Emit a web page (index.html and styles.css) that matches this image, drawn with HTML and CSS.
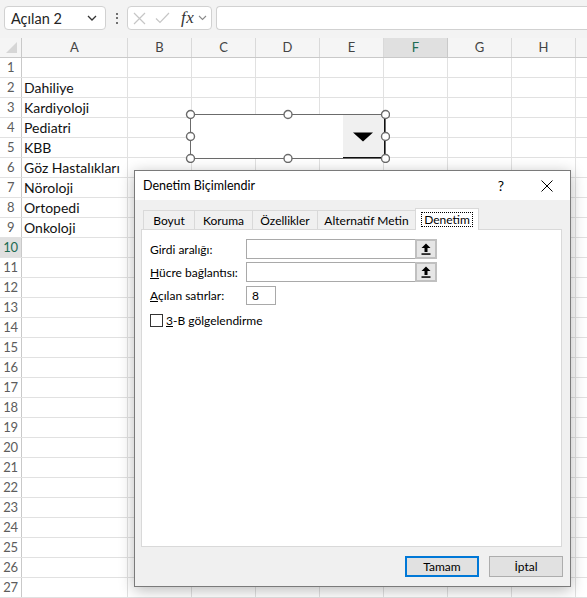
FILE: index.html
```html
<!DOCTYPE html>
<html lang="tr">
<head>
<meta charset="utf-8">
<title>Excel</title>
<link rel="stylesheet" href="styles.css">
</head>
<body>
<div class="fbar">
  <div class="namebox">
    <span>Açılan 2</span>
    <svg class="chev" width="10" height="6" viewBox="0 0 10 6"><path d="M1 1 L5 5 L9 1" fill="none" stroke="#333" stroke-width="1.3"/></svg>
  </div>
  <div class="vdots"><i></i><i></i><i></i></div>
  <div class="fxbox">
    <svg class="ic" width="13" height="13" viewBox="0 0 13 13"><path d="M1 1 L12 12 M12 1 L1 12" stroke="#c6c6c6" stroke-width="1.2"/></svg>
    <svg class="ic" width="15" height="12" viewBox="0 0 15 12"><path d="M1 6.5 L5 10.5 L14 1" fill="none" stroke="#c6c6c6" stroke-width="1.2"/></svg>
    <span class="fx">fx</span>
    <svg class="chev2" width="9" height="6" viewBox="0 0 9 6"><path d="M1 1 L4.5 4.5 L8 1" fill="none" stroke="#8a8a8a" stroke-width="1.1"/></svg>
  </div>
  <div class="formula"></div>
</div>

<div class="sheet">
  <div class="hdr">
    <div class="corner"><span class="tri"></span></div>
    <div class="ch ca">A</div>
    <div class="ch">B</div>
    <div class="ch">C</div>
    <div class="ch">D</div>
    <div class="ch">E</div>
    <div class="ch sel">F</div>
    <div class="ch">G</div>
    <div class="ch">H</div>
    <div class="ch last"></div>
  </div>
  <div class="row"><div class="rh">1</div><div class="cell"></div><div class="rest"></div></div>
  <div class="row"><div class="rh">2</div><div class="cell">Dahiliye</div><div class="rest"></div></div>
  <div class="row"><div class="rh">3</div><div class="cell">Kardiyoloji</div><div class="rest"></div></div>
  <div class="row"><div class="rh">4</div><div class="cell">Pediatri</div><div class="rest"></div></div>
  <div class="row"><div class="rh">5</div><div class="cell">KBB</div><div class="rest"></div></div>
  <div class="row"><div class="rh">6</div><div class="cell">Göz Hastalıkları</div><div class="rest"></div></div>
  <div class="row"><div class="rh">7</div><div class="cell">Nöroloji</div><div class="rest"></div></div>
  <div class="row"><div class="rh">8</div><div class="cell">Ortopedi</div><div class="rest"></div></div>
  <div class="row"><div class="rh">9</div><div class="cell">Onkoloji</div><div class="rest"></div></div>
  <div class="row"><div class="rh sel">10</div><div class="cell"></div><div class="rest"></div></div>
  <div class="row"><div class="rh">11</div><div class="cell"></div><div class="rest"></div></div>
  <div class="row"><div class="rh">12</div><div class="cell"></div><div class="rest"></div></div>
  <div class="row"><div class="rh">13</div><div class="cell"></div><div class="rest"></div></div>
  <div class="row"><div class="rh">14</div><div class="cell"></div><div class="rest"></div></div>
  <div class="row"><div class="rh">15</div><div class="cell"></div><div class="rest"></div></div>
  <div class="row"><div class="rh">16</div><div class="cell"></div><div class="rest"></div></div>
  <div class="row"><div class="rh">17</div><div class="cell"></div><div class="rest"></div></div>
  <div class="row"><div class="rh">18</div><div class="cell"></div><div class="rest"></div></div>
  <div class="row"><div class="rh">19</div><div class="cell"></div><div class="rest"></div></div>
  <div class="row"><div class="rh">20</div><div class="cell"></div><div class="rest"></div></div>
  <div class="row"><div class="rh">21</div><div class="cell"></div><div class="rest"></div></div>
  <div class="row"><div class="rh">22</div><div class="cell"></div><div class="rest"></div></div>
  <div class="row"><div class="rh">23</div><div class="cell"></div><div class="rest"></div></div>
  <div class="row"><div class="rh">24</div><div class="cell"></div><div class="rest"></div></div>
  <div class="row"><div class="rh">25</div><div class="cell"></div><div class="rest"></div></div>
  <div class="row"><div class="rh">26</div><div class="cell"></div><div class="rest"></div></div>
  <div class="row"><div class="rh">27</div><div class="cell"></div><div class="rest"></div></div>
</div>

<svg class="ddctl" width="205" height="54" viewBox="0 0 205 54">
  <rect x="5.5" y="5.5" width="195" height="44" fill="#fff" stroke="#6b6b6b" stroke-width="1"/>
  <rect x="158" y="6" width="42" height="43" fill="#f0f0f0"/>
  <path d="M158 48.5 H199.5 V6" fill="none" stroke="#111" stroke-width="1"/>
  <path d="M168 23.5 H188 L178 32.5 Z" fill="#000"/>
  <g fill="#fff" stroke="#6b6b6b" stroke-width="1.4">
    <circle cx="5.5" cy="5.5" r="4"/>
    <circle cx="103" cy="5.5" r="4"/>
    <circle cx="200.5" cy="5.5" r="4"/>
    <circle cx="5.5" cy="27.5" r="4"/>
    <circle cx="200.5" cy="27.5" r="4"/>
    <circle cx="5.5" cy="49.5" r="4"/>
    <circle cx="103" cy="49.5" r="4"/>
    <circle cx="200.5" cy="49.5" r="4"/>
  </g>
</svg>

<div class="dlg">
  <div class="dtitle">
    <span class="dt">Denetim Biçimlendir</span>
    <span class="tbtn help">?</span>
    <span class="tbtn"><svg width="12" height="12" viewBox="0 0 12 12"><path d="M0.5 0.5 L11.5 11.5 M11.5 0.5 L0.5 11.5" stroke="#000" stroke-width="1"/></svg></span>
  </div>
  <div class="dbody">
    <div class="tabs">
      <div class="tab t1">Boyut</div>
      <div class="tab t2">Koruma</div>
      <div class="tab t3">Özellikler</div>
      <div class="tab t4">Alternatif Metin</div>
      <div class="tab active"><span class="focus">Denetim</span></div>
    </div>
    <div class="panel">
      <div class="frow">
        <span class="flabel">Girdi aralığı:</span>
        <div class="refinput"><div class="field"></div><div class="refbtn"><svg width="10" height="12" viewBox="0 0 10 12"><path d="M5 0.5 L9.5 5 H6.5 V9 H3.5 V5 H0.5 Z" fill="#000"/><rect x="0.5" y="10.3" width="9" height="1.5" fill="#000"/></svg></div></div>
      </div>
      <div class="frow">
        <span class="flabel"><u>H</u>ücre bağlantısı:</span>
        <div class="refinput"><div class="field"></div><div class="refbtn"><svg width="10" height="12" viewBox="0 0 10 12"><path d="M5 0.5 L9.5 5 H6.5 V9 H3.5 V5 H0.5 Z" fill="#000"/><rect x="0.5" y="10.3" width="9" height="1.5" fill="#000"/></svg></div></div>
      </div>
      <div class="frow">
        <span class="flabel"><u>A</u>çılan satırlar:</span>
        <div class="numbox">8</div>
      </div>
      <div class="chkrow">
        <span class="chk"></span>
        <span><u>3</u>-B gölgelendirme</span>
      </div>
    </div>
    <div class="btns">
      <div class="btn primary">Tamam</div>
      <div class="btn">İptal</div>
    </div>
  </div>
</div>
</body>
</html>
```

FILE: styles.css
```css
* { box-sizing: border-box; margin: 0; padding: 0; }

body {
  margin: 0;
  width: 587px;
  height: 598px;
  overflow: hidden;
  position: relative;
  background: #fff;
  font-family: Lato, "Noto Sans", sans-serif;
  color: #000;
}

/* formula bar */
.fbar {
  height: 38px;
  background: #f3f3f3;
  display: flex;
  align-items: flex-start;
  padding: 6px 0 0 4px;
  white-space: nowrap;
}
.namebox {
  width: 102px;
  height: 24px;
  background: #fff;
  border: 1px solid #d1d1d1;
  border-radius: 4px;
  display: flex;
  align-items: center;
  justify-content: space-between;
  padding: 0 8px 0 6px;
  font-size: 14.5px;
  color: #242424;
}
.vdots {
  width: 21px;
  height: 24px;
  display: flex;
  flex-direction: column;
  align-items: center;
  justify-content: center;
  gap: 2.5px;
}
.vdots i {
  width: 2px;
  height: 2px;
  background: #444;
  border-radius: 1px;
}
.fxbox {
  width: 85px;
  height: 24px;
  background: #fff;
  border: 1px solid #d1d1d1;
  border-radius: 4px;
  display: flex;
  align-items: center;
  padding-left: 5px;
}
.fxbox .ic { margin-right: 9px; }
.fx {
  font-family: "Liberation Serif", serif;
  font-style: italic;
  font-size: 17px;
  color: #333;
  margin-left: 2px;
  letter-spacing: 0.5px;
}
.chev2 { margin-left: 4px; }
.formula {
  flex: 1;
  height: 24px;
  margin-left: 4px;
  background: #fff;
  border: 1px solid #d1d1d1;
  border-right: none;
  border-radius: 4px 0 0 4px;
}

/* sheet */
.hdr {
  height: 20px;
  display: flex;
  background: #f5f5f5;
  border-bottom: 1px solid #c9c9c9;
}
.corner {
  width: 22px;
  border-right: 1px solid #c9c9c9;
  position: relative;
}
.tri {
  position: absolute;
  right: 4px;
  bottom: 4px;
  width: 0;
  height: 0;
  border-left: 11px solid transparent;
  border-bottom: 11px solid #d6d6d6;
}
.ch {
  width: 64px;
  border-right: 1px solid #d9d9d9;
  text-align: center;
  font-size: 13px;
  line-height: 19px;
  color: #444;
}
.ch.ca { width: 106px; }
.ch.sel { background: #e0e0e0; color: #1d6b52; border-right-color: #c9c9c9; }
.ch.last { flex: 1; border-right: none; }

.row {
  height: 20px;
  display: flex;
  border-bottom: 1px solid #e1e1e1;
}
.rh {
  width: 22px;
  border-right: 1px solid #c9c9c9;
  font-size: 13px;
  line-height: 19px;
  color: #5c5c5c;
  text-align: center;
  letter-spacing: -0.3px;
}
.rh.sel { background: #e0e0e0; color: #1d6b52; }
.cell {
  width: 106px;
  border-right: 1px solid #e1e1e1;
  padding-left: 2px;
  font-size: 14px;
  line-height: 19px;
  color: #111;
  white-space: nowrap;
}
.rest {
  flex: 1;
  background: repeating-linear-gradient(to right, transparent 0 63px, #e1e1e1 63px 64px);
}

/* floating drop-down control on the sheet */
.ddctl {
  position: absolute;
  left: 185px;
  top: 109px;
}

/* dialog */
.dlg {
  position: absolute;
  left: 134px;
  top: 170px;
  width: 437px;
  height: 417px;
  background: #f0f0f0;
  border: 1px solid #7a7a7a;
  box-shadow: 0 3px 14px rgba(0, 0, 0, 0.28);
  font-size: 12px;
  display: flex;
  flex-direction: column;
}
.dtitle {
  height: 29px;
  background: #fff;
  display: flex;
  align-items: center;
  padding-left: 8px;
}
.dt { font-size: 12.5px; color: #000; flex: 1; }
.tbtn {
  width: 46px;
  height: 29px;
  display: flex;
  align-items: center;
  justify-content: center;
}
.help { font-size: 14px; }

.dbody {
  flex: 1;
  padding: 8px 8px 0 6px;
  display: flex;
  flex-direction: column;
}
.tabs {
  height: 21px;
  display: flex;
  align-items: flex-end;
  padding-left: 2px;
  position: relative;
  z-index: 2;
}
.tab {
  height: 19px;
  border: 1px solid #d9d9d9;
  border-bottom: none;
  margin-right: -1px;
  display: flex;
  align-items: center;
  justify-content: center;
  font-size: 12px;
  color: #000;
}
.t1 { width: 52px; }
.t2 { width: 59px; }
.t3 { width: 66px; }
.t4 { width: 99px; }
.tab.active {
  width: 64px;
  height: 22px;
  margin-bottom: -1px;
  background: #fff;
  padding-bottom: 1px;
}
.focus {
  border: 1px dotted #000;
  padding: 0 2px;
  line-height: 13px;
}
.panel {
  height: 318px;
  background: #fff;
  border: 1px solid #d9d9d9;
  padding: 9px 8px;
}
.frow {
  height: 20px;
  display: flex;
  align-items: center;
  margin-bottom: 3px;
}
.flabel { width: 96px; font-size: 12px; }
.refinput {
  width: 191px;
  height: 20px;
  border: 1px solid #a9a9a9;
  display: flex;
}
.field { flex: 1; }
.refbtn {
  width: 22px;
  height: 20px;
  margin: -1px -1px -1px 0;
  border: 2px solid #c0c0c0;
  background: #e6e6e6;
  display: flex;
  align-items: center;
  justify-content: center;
}
.numbox {
  width: 30px;
  height: 19px;
  border: 1px solid #a9a9a9;
  padding-left: 5px;
  line-height: 17px;
  font-size: 12px;
}
.chkrow {
  display: flex;
  align-items: center;
  margin-top: 8px;
  font-size: 12px;
}
.chk {
  width: 13px;
  height: 13px;
  border: 1px solid #333;
  background: #fff;
  margin-right: 3px;
}
.btns {
  display: flex;
  justify-content: flex-end;
  gap: 10px;
  margin-top: 9px;
  margin-right: -1px;
}
.btn {
  width: 74px;
  height: 21px;
  background: #e1e1e1;
  border: 1px solid #adadad;
  display: flex;
  align-items: center;
  justify-content: center;
  font-size: 12px;
}
.btn.primary { border: 2px solid #0078d7; }
```
